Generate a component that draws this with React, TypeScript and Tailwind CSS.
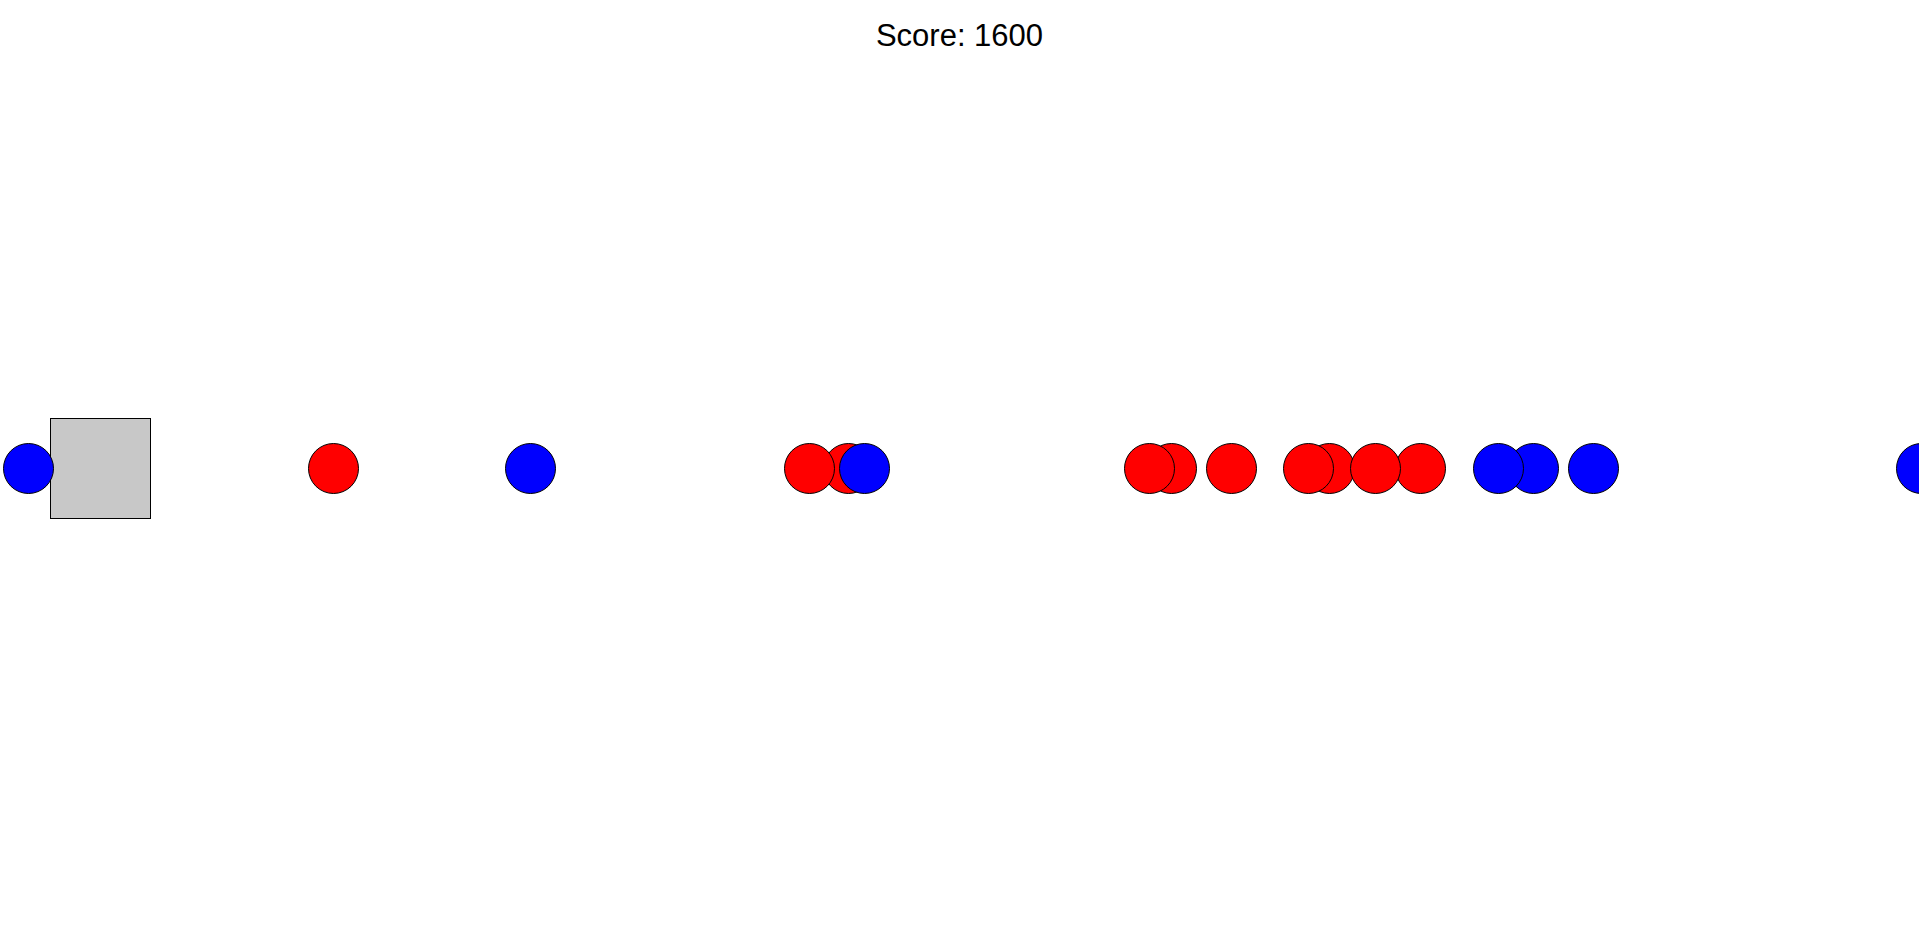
type Ball = { x: number; color: "red" | "blue" };

// drawn in order, later ones sit on top
const balls: Ball[] = [
  { x: 1921, color: "blue" },
  { x: 1593, color: "blue" },
  { x: 1533, color: "blue" },
  { x: 1498, color: "blue" },
  { x: 1420, color: "red" },
  { x: 1329, color: "red" },
  { x: 1375, color: "red" },
  { x: 1308, color: "red" },
  { x: 1231, color: "red" },
  { x: 1171, color: "red" },
  { x: 1149, color: "red" },
  { x: 848, color: "red" },
  { x: 864, color: "blue" },
  { x: 809, color: "red" },
  { x: 530, color: "blue" },
  { x: 333, color: "red" },
  { x: 28, color: "blue" },
];

const LANE_Y = 468;
const R = 25.5;

export default function App() {
  return (
    <div className="relative h-screen w-full overflow-hidden bg-white font-['Liberation_Sans',Arial,sans-serif]">
      <div className="flex justify-center pt-[20px]">
        <span className="text-[31px] leading-none text-black">Score: 1600</span>
      </div>

      {/* player */}
      <div className="absolute left-[49.5px] top-[417.5px] h-[101px] w-[101px] border border-black bg-[#c8c8c8]" />

      {balls.map((b, i) => (
        <div
          key={i}
          className={
            "absolute h-[51px] w-[51px] rounded-full border border-black " +
            (b.color === "red" ? "bg-[#ff0000]" : "bg-[#0000ff]")
          }
          style={{ left: b.x - R, top: LANE_Y - R }}
        />
      ))}
    </div>
  );
}
